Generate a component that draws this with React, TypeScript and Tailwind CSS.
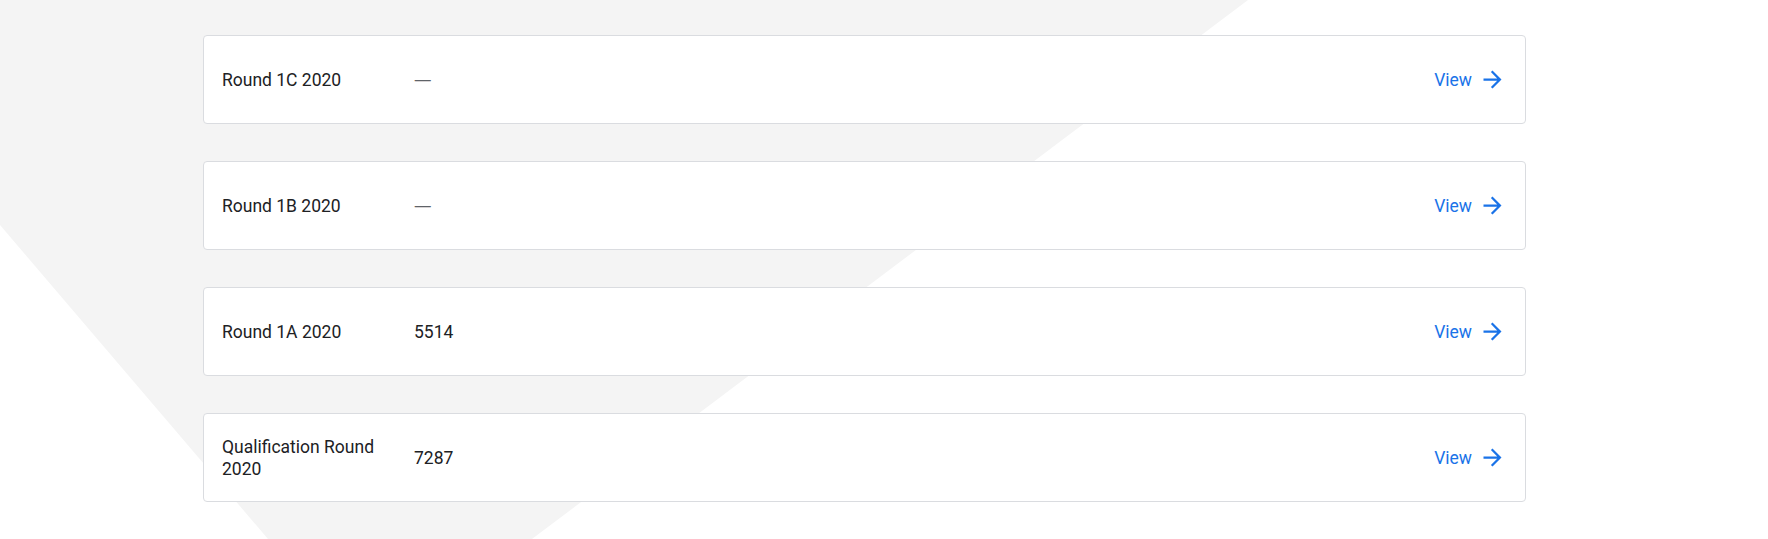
import React from 'react';

interface Round {
  name: string;
  score: string | null;
}

const ROUNDS: Round[] = [
  { name: 'Round 1C 2020', score: null },
  { name: 'Round 1B 2020', score: null },
  { name: 'Round 1A 2020', score: '5514' },
  { name: 'Qualification Round 2020', score: '7287' },
];

function ArrowIcon() {
  return (
    <svg width="27" height="27" viewBox="0 0 24 24" fill="#1a73e8" aria-hidden="true">
      <path d="M12 4l-1.41 1.41L16.17 11H4v2h12.17l-5.58 5.59L12 20l8-8z" />
    </svg>
  );
}

function RoundRow({ round }: { round: Round }) {
  return (
    <div className="h-[89px] w-full flex items-center bg-white border border-[#dadce0] rounded-[4px] pl-[18px] pr-[19px]">
      <div className="w-[192px] shrink-0 text-[17.5px] leading-[22px] text-[#202124]">{round.name}</div>
      <div className="flex-1 text-[17.5px] leading-[22px]">
        {round.score ? (
          <span className="text-[#202124]">{round.score}</span>
        ) : (
          <span className="text-[#5f6368] font-['Open_Sans',sans-serif]">—</span>
        )}
      </div>
      <a href="#" className="flex items-center gap-[7px] text-[#1a73e8] text-[17.5px] leading-[22px]">
        View
        <ArrowIcon />
      </a>
    </div>
  );
}

export default function App() {
  return (
    <div className="relative w-full h-[539px] overflow-hidden bg-white" style={{ fontFamily: 'Roboto, "Noto Sans", sans-serif' }}>
      {/* background decoration */}
      <svg className="absolute inset-0" width="1768" height="539" viewBox="0 0 1768 539" aria-hidden="true">
        <polygon points="0,0 1248,0 532,539 268,539 0,225" fill="#f4f4f4" />
      </svg>

      <div className="relative pl-[203px] pt-[35px]">
        <div className="w-[1323px] flex flex-col gap-[37px]">
          {ROUNDS.map((r) => (
            <RoundRow key={r.name} round={r} />
          ))}
        </div>
      </div>
    </div>
  );
}
